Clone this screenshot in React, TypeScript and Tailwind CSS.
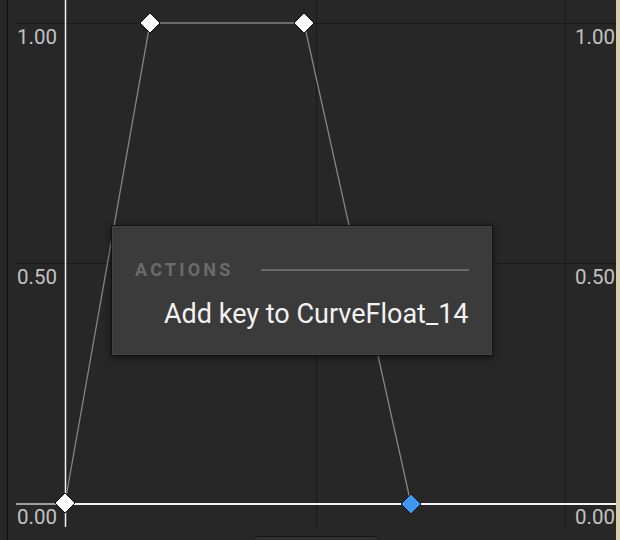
import React from "react";

type Key = { x: number; y: number; selected?: boolean };

const keys: Key[] = [
  { x: 65, y: 503 },
  { x: 150, y: 23 },
  { x: 304, y: 23 },
  { x: 411, y: 504, selected: true },
];

const rows = [
  { y: 23, label: "1.00" },
  { y: 263, label: "0.50" },
  { y: 503, label: "0.00" },
];

function KeyDiamond({ x, y, selected }: Key) {
  const r = 10;
  return (
    <polygon
      points={`${x},${y - r} ${x + r},${y} ${x},${y + r} ${x - r},${y}`}
      fill={selected ? "#4096ee" : "#ffffff"}
      stroke="#101010"
      strokeWidth={1}
    />
  );
}

function CurveCanvas() {
  return (
    <svg width={620} height={540} className="absolute inset-0">
      {/* grid */}
      <line x1={16} y1={23.5} x2={616} y2={23.5} stroke="#1a1a1a" />
      <line x1={16} y1={263.5} x2={616} y2={263.5} stroke="#1a1a1a" />
      <line x1={316.5} y1={0} x2={316.5} y2={527} stroke="#1a1a1a" />
      <line x1={565.5} y1={0} x2={565.5} y2={527} stroke="#1a1a1a" />

      {/* current time marker */}
      <line x1={65.5} y1={0} x2={65.5} y2={527} stroke="#f2f2f2" strokeWidth={1.5} />

      {/* zero line */}
      <line x1={16} y1={504} x2={60} y2={504} stroke="#c8c8c8" strokeWidth={1.5} />
      <line x1={60} y1={504} x2={616} y2={504} stroke="#f4f4f4" strokeWidth={2} />

      {/* curve */}
      <polyline
        points="65,503 150,23 304,23 411,504"
        fill="none"
        stroke="#858585"
        strokeWidth={1.3}
      />

      {keys.map((k) => (
        <KeyDiamond key={k.x} {...k} />
      ))}
    </svg>
  );
}

export default function App() {
  return (
    <div className="relative w-[620px] h-[540px] overflow-hidden bg-[#272727] font-['Roboto','Liberation_Sans',sans-serif] flex">
      <div className="w-[7px]" />
      <div className="w-px bg-[#0e0e0e]" />
      <div className="flex-1" />
      <div className="w-[4px] bg-[#d8cfae]" />

      <CurveCanvas />

      {rows.map((r) => (
        <React.Fragment key={r.label}>
          <span
            className="absolute left-[17px] text-[20.5px] leading-[20px] text-[#c2c2c2]"
            style={{ top: r.y + 4 }}
          >
            {r.label}
          </span>
          <span
            className="absolute left-[575px] text-[20.5px] leading-[20px] text-[#c2c2c2]"
            style={{ top: r.y + 4 }}
          >
            {r.label}
          </span>
        </React.Fragment>
      ))}

      {/* bottom tab peeking in */}
      <div className="absolute left-[252px] top-[536px] w-[128px] h-[12px] rounded-t-[6px] border border-[#171717] bg-[#303030]" />

      {/* context menu */}
      <div className="absolute left-[111px] top-[225px] w-[382px] border border-[#111111] bg-[#3b3b3b] shadow-[0_2px_6px_rgba(0,0,0,0.5)]">
        <div className="flex flex-col pt-[34px] pl-[22px] pr-[22px] pb-[26px] border border-[#434343]">
          <div className="flex items-center h-[18px]">
            <span className="text-[18px] leading-[18px] font-bold tracking-[3.2px] text-[#6b6b6b]">
              ACTIONS
            </span>
            <div className="flex-1 h-[2px] ml-[28px] bg-[#696969]" />
          </div>
          <div className="mt-[22px] pl-[29px] whitespace-nowrap text-[27px] leading-[27px] text-[#f2f2f2]">
            Add key to CurveFloat_14
          </div>
        </div>
      </div>
    </div>
  );
}
